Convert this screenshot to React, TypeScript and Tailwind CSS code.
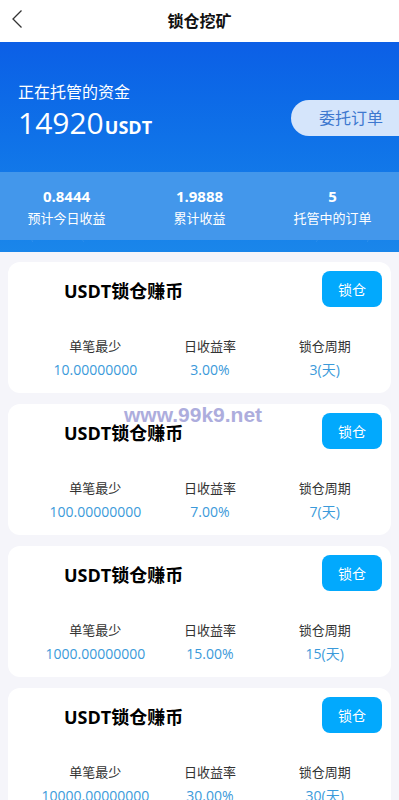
import React from 'react';

const plans = [
  { min: '10.00000000', rate: '3.00%', days: '3(天)' },
  { min: '100.00000000', rate: '7.00%', days: '7(天)' },
  { min: '1000.00000000', rate: '15.00%', days: '15(天)' },
  { min: '10000.00000000', rate: '30.00%', days: '30(天)' },
];

const stats = [
  { value: '0.8444', label: '预计今日收益' },
  { value: '1.9888', label: '累计收益' },
  { value: '5', label: '托管中的订单' },
];

const font = { fontFamily: '"Open Sans", "Noto Sans CJK SC", sans-serif' };

const App: React.FC = () => {
  return (
    <div className="relative min-h-screen bg-[#f5f5fa] overflow-hidden" style={font}>
      {/* header */}
      <div className="relative h-[42px] bg-white flex items-center justify-center">
        <svg className="absolute left-[10px] top-[9px]" width="14" height="20" viewBox="0 0 14 20" fill="none">
          <path d="M11.5 1.5L3 10l8.5 8.5" stroke="#333" strokeWidth="1.3" />
        </svg>
        <h1 className="text-[16px] font-bold text-[#111]">锁仓挖矿</h1>
      </div>

      {/* hero */}
      <div className="relative bg-gradient-to-b from-[#0c5fe6] to-[#1a86ea] pb-[12px]">
        <svg className="absolute left-0 top-0 pointer-events-none" width="399" height="200" viewBox="0 0 399 200" fill="none">
          <ellipse cx="200" cy="190" rx="170" ry="58" stroke="#ffffff" strokeOpacity="0.08" />
          <ellipse cx="200" cy="190" rx="120" ry="40" stroke="#ffffff" strokeOpacity="0.07" />
          <circle cx="108" cy="142" r="1.6" fill="#fff" fillOpacity="0.45" />
          <circle cx="197" cy="143" r="1.1" fill="#fff" fillOpacity="0.35" />
          <circle cx="245" cy="143" r="1.3" fill="#fff" fillOpacity="0.35" />
          <circle cx="304" cy="151" r="1.6" fill="#fff" fillOpacity="0.4" />
          <circle cx="166" cy="159" r="1.2" fill="#fff" fillOpacity="0.3" />
          <circle cx="380" cy="165" r="1.4" fill="#fff" fillOpacity="0.35" />
        </svg>
        <div className="relative h-[130px] flex items-center justify-between pl-[18px]">
          <div className="pt-[14px]">
            <div className="text-[16px] leading-[22px] text-white">正在托管的资金</div>
            <div className="flex items-baseline text-white leading-[40px]">
              <span className="text-[30px]">14920</span>
              <span className="text-[18px] font-bold ml-[1px]">USDT</span>
            </div>
          </div>
          <div className="mt-[22px] h-[36px] w-[112px] -mr-[4px] rounded-l-full bg-[#d5e5fb] flex items-center pl-[28px] text-[16px] text-[#3d78cf]">
            委托订单
          </div>
        </div>
        <div className="relative h-[68px] bg-[#4397eb] grid grid-cols-3 text-white">
          {stats.map((s) => (
            <div key={s.label} className="flex flex-col items-center justify-center pt-[1px]">
              <div className="text-[15px] font-bold leading-[22px]">{s.value}</div>
              <div className="text-[13px] leading-[22px]">{s.label}</div>
            </div>
          ))}
        </div>
      </div>

      {/* plans */}
      <div className="px-[8px] pt-[10px] flex flex-col gap-[11px]">
        {plans.map((p, i) => (
          <div key={i} className="bg-white rounded-[12px] pt-[9px] pr-[9px] pb-[13px]">
            <div className="flex items-center justify-between h-[36px]">
              <div className="pl-[56px] pt-[5px] text-[18px] font-bold text-black">USDT锁仓赚币</div>
              <button className="w-[60px] h-[36px] rounded-[8px] bg-[#02a9fd] text-white text-[14px]">锁仓</button>
            </div>
            <div className="mt-[29px] pl-[30px] grid grid-cols-3 text-center">
              <div className="text-[13px] leading-[20px] text-[#333]">单笔最少</div>
              <div className="text-[13px] leading-[20px] text-[#333]">日收益率</div>
              <div className="text-[13px] leading-[20px] text-[#333]">锁仓周期</div>
              <div className="mt-[4px] text-[14px] leading-[20px] text-[#3b9ada]">{p.min}</div>
              <div className="mt-[4px] text-[14px] leading-[20px] text-[#3b9ada]">{p.rate}</div>
              <div className="mt-[4px] text-[14px] leading-[20px] text-[#3b9ada]">{p.days}</div>
            </div>
          </div>
        ))}
      </div>

      {/* watermark */}
      <div
        className="absolute left-[124px] top-[399px] text-[21px] font-bold text-[#a5a5da] opacity-90 pointer-events-none"
        style={{ fontFamily: '"Liberation Sans", Arial, sans-serif' }}
      >
        www.99k9.net
      </div>
    </div>
  );
};

export default App;
